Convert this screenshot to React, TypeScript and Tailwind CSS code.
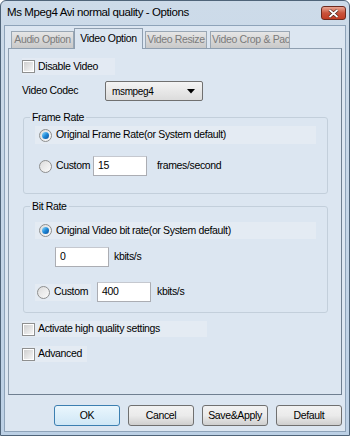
const font = { fontFamily: '"Liberation Sans", Arial, sans-serif' };

function Radio({ on }: { on?: boolean }) {
  return (
    <span className="relative flex h-[13px] w-[13px] shrink-0 items-center justify-center rounded-full border border-[#8e8f8f] bg-gradient-to-br from-[#dcdcdc] to-[#fbfbfb]">
      {on && (
        <span className="h-[7px] w-[7px] rounded-full bg-gradient-to-br from-[#8ee0ff] via-[#1f8ad8] to-[#0f4f9a]" />
      )}
    </span>
  );
}

function CheckBox() {
  return (
    <span className="flex h-[13px] w-[13px] shrink-0 items-center justify-center border border-[#8e8f8f] bg-white">
      <span className="h-[9px] w-[9px] bg-gradient-to-br from-[#cfcfcf] to-[#f6f6f6]" />
    </span>
  );
}

function TextBox({ value, w }: { value: string; w: string }) {
  return (
    <div
      className={`${w} flex h-[20px] shrink-0 items-center border border-[#abadb3] border-t-[#c5c8cf] bg-white pl-[4px] text-black`}
    >
      {value}
    </div>
  );
}

function Btn({ label, focus }: { label: string; focus?: boolean }) {
  return (
    <div
      className={`flex h-[21px] w-[66px] items-center justify-center rounded-[3px] border text-black ${
        focus ? "border-[#3c7fb1] bg-gradient-to-b from-[#eaf6fd] to-[#cfe7f6]" : "border-[#707070] bg-gradient-to-b from-[#f2f2f2] via-[#ebebeb] to-[#cfcfcf]"
      }`}
    >
      {label}
    </div>
  );
}

export default function App() {
  return (
    <div
      style={font}
      className="flex h-[436px] w-[350px] flex-col overflow-hidden rounded-t-[6px] border border-[#4f6479] bg-gradient-to-b from-[#cddbe9] to-[#bcd0e5] text-[10.5px] tracking-[-0.35px]"
    >
      {/* title bar */}
      <div className="flex h-[24px] shrink-0 items-center justify-between pl-[6px] pr-[3px]">
        <span className="text-[11.5px] tracking-[-0.4px] text-black">Ms Mpeg4 Avi normal quality - Options</span>
        <div className="flex h-[14px] w-[25px] items-center justify-center rounded-[3px] border border-[#6d2a1f] bg-gradient-to-b from-[#e8a593] via-[#c9533c] to-[#c23d24]">
          <svg width="11" height="9" viewBox="0 0 11 9">
            <path d="M1.5 1 L9.5 8 M9.5 1 L1.5 8" stroke="#3a1a14" strokeWidth="3" />
            <path d="M1.5 1 L9.5 8 M9.5 1 L1.5 8" stroke="#ffffff" strokeWidth="1.8" />
          </svg>
        </div>
      </div>

      {/* body */}
      <div className="mx-[3px] mb-[3px] flex flex-1 flex-col border border-[#8ea3b9] bg-[#dce6f1] pl-[3px]">
        {/* tabs */}
        <div className="ml-[3px] mt-[1px] flex h-[21px] items-end whitespace-nowrap">
          <div className="flex h-[17px] w-[63px] items-center justify-center border border-b-0 border-[#9aa7b4] bg-gradient-to-b from-[#e6e6e6] to-[#c9c9c9] text-[#7b7b7b]">
            Audio Option
          </div>
          <div className="relative z-10 -mb-px flex h-[21px] w-[69px] items-center justify-center border border-b-0 border-[#8f9fb0] bg-[#dce6f1] text-black">
            Video Option
          </div>
          <div className="ml-[2px] flex h-[17px] w-[62px] items-center justify-center border border-b-0 border-[#9aa7b4] bg-gradient-to-b from-[#e6e6e6] to-[#c9c9c9] text-[#7b7b7b]">
            Video Resize
          </div>
          <div className="ml-[3px] flex h-[17px] w-[80px] items-center justify-start overflow-hidden border border-b-0 border-[#9aa7b4] bg-gradient-to-b from-[#e6e6e6] to-[#c9c9c9] pl-[1px] text-[#7b7b7b]">
            Video Crop &amp; Pac
          </div>
        </div>

        {/* panel */}
        <div className="flex h-[347px] w-[334px] flex-col border border-[#8f9fb0] border-r-[#6f7f90] border-b-[#6f7f90] pl-[13px] text-black">
          <div className="mt-[9px] flex h-[17px] w-[93px] items-center gap-[3px] bg-[#e3eaf3]">
            <CheckBox />
            <span>Disable Video</span>
          </div>

          <div className="mt-[6px] flex h-[20px] items-center">
            <span className="w-[83px]">Video Codec</span>
            <div className="flex h-[20px] w-[98px] items-center justify-between rounded-[2px] border border-[#707070] bg-gradient-to-b from-[#f4f4f4] to-[#dcdcdc] pl-[6px] pr-[7px]">
              <span className="text-[10px]">msmpeg4</span>
              <svg width="8" height="5" viewBox="0 0 8 5">
                <path d="M0 0 H8 L4 4.5 Z" fill="#000" />
              </svg>
            </div>
          </div>

          {/* Frame Rate */}
          <fieldset className="ml-[1px] mt-[10px] h-[83px] w-[305px] rounded-[3px] border border-[#c3cfdb] pl-[11px]">
            <legend className="ml-[-5px] px-[2px] leading-[12px]">Frame Rate</legend>
            <div className="mt-[3px] flex h-[18px] w-[281px] items-center gap-[4px] bg-[#e4ebf3] pl-[4px]">
              <Radio on />
              <span>Original Frame Rate(or System default)</span>
            </div>
            <div className="mt-[12px] flex h-[20px] items-center">
              <div className="flex w-[58px] items-center gap-[4px] pl-[4px]">
                <Radio />
                <span>Custom</span>
              </div>
              <TextBox value="15" w="w-[54px]" />
              <span className="ml-[10px]">frames/second</span>
            </div>
          </fieldset>

          {/* Bit Rate */}
          <fieldset className="ml-[1px] mt-[6px] h-[113px] w-[305px] rounded-[3px] border border-[#c3cfdb] pl-[11px]">
            <legend className="ml-[-5px] px-[2px] leading-[12px]">Bit Rate</legend>
            <div className="mt-[10px] flex h-[17px] w-[281px] items-center gap-[4px] bg-[#e4ebf3] pl-[4px]">
              <Radio on />
              <span>Original Video bit rate(or System default)</span>
            </div>
            <div className="ml-[20px] mt-[8px] flex h-[20px] items-center">
              <TextBox value="0" w="w-[54px]" />
              <span className="ml-[5px]">kbits/s</span>
            </div>
            <div className="mt-[15px] flex h-[20px] items-center">
              <div className="flex h-[17px] w-[56px] items-center gap-[4px] bg-[#e4ebf3] pl-[2px]">
                <Radio />
                <span>Custom</span>
              </div>
              <span className="w-[6px]" />
              <TextBox value="400" w="w-[54px]" />
              <span className="ml-[6px]">kbits/s</span>
            </div>
          </fieldset>

          <div className="mt-[8px] flex h-[16px] w-[185px] items-center gap-[3px] bg-[#e4ebf3]">
            <CheckBox />
            <span>Activate high quality settings</span>
          </div>
          <div className="mt-[9px] flex h-[16px] w-[65px] items-center gap-[3px] bg-[#e4ebf3]">
            <CheckBox />
            <span>Advanced</span>
          </div>
        </div>

        {/* buttons */}
        <div className="mt-[10px] flex w-[334px] justify-end gap-[8px]">
          <Btn label="OK" focus />
          <Btn label="Cancel" />
          <Btn label="Save&Apply" />
          <Btn label="Default" />
        </div>
      </div>
    </div>
  );
}
